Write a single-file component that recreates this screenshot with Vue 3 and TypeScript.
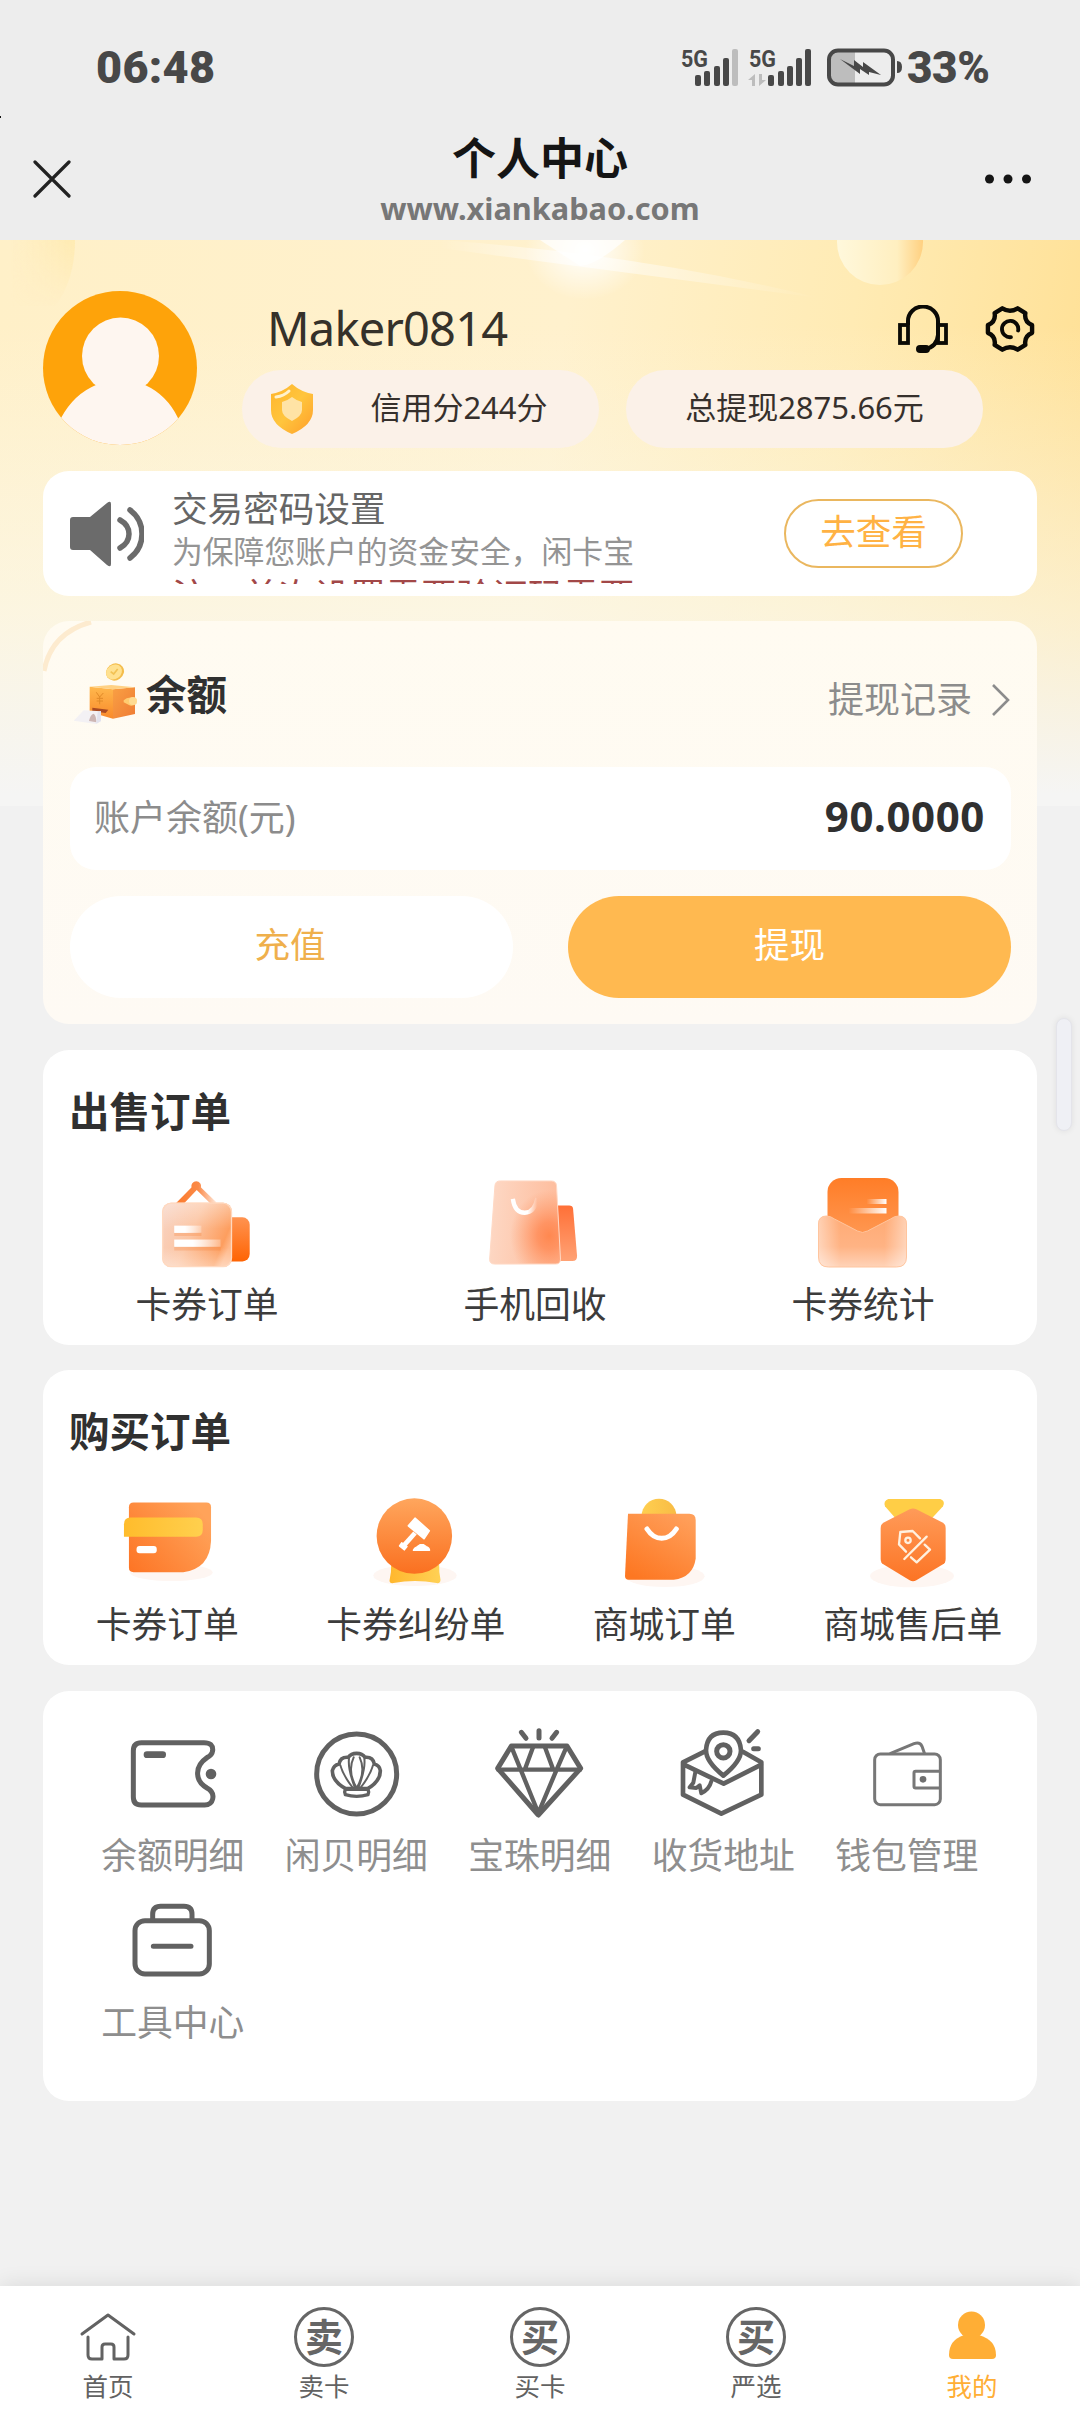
<script setup lang="ts">
interface Item {
  icon: string
  label: string
  box: string
}

const sellItems: Item[] = [
  { icon: 'coupon', label: '卡券订单', box: '178 45 290 290' },
  { icon: 'phone', label: '手机回收', box: '1164 45 290 290' },
  { icon: 'stats', label: '卡券统计', box: '814.500 1175 96 96' },
]

const buyItems: Item[] = [
  { icon: 'card', label: '卡券订单', box: '237 45 290 290' },
  { icon: 'gavel', label: '卡券纠纷单', box: '986 45 290 290' },
  { icon: 'bag', label: '商城订单', box: '168 45 288 288' },
  { icon: 'medal', label: '商城售后单', box: '916 45 288 288' },
]

const toolItems: Item[] = [
  { icon: 'ticket', label: '余额明细', box: '135 48 288 288' },
  { icon: 'shell', label: '闲贝明细', box: '685 48 288 288' },
  { icon: 'gem', label: '宝珠明细', box: '-84 48 288 288' },
  { icon: 'address', label: '收货地址', box: '465 48 288 288' },
  { icon: 'wallet', label: '钱包管理', box: '1016 48 288 288' },
  { icon: 'toolbox', label: '工具中心', box: '135 549 288 288' },
]

const tabs = [
  { icon: 'home', label: '首页', glyph: '' },
  { icon: 'glyph', label: '卖卡', glyph: '卖' },
  { icon: 'glyph', label: '买卡', glyph: '买' },
  { icon: 'glyph', label: '严选', glyph: '买' },
  { icon: 'me', label: '我的', glyph: '' },
]
</script>

<template>
  <div class="page">
    <header class="top">
      <div class="status">
        <span class="clock">06:48</span>
        <svg class="signals" width="224" height="44" viewBox="680 46 224 44">
          <g fill="#484848">
            <text x="681" y="67" class="net" textLength="27" lengthAdjust="spacingAndGlyphs">5G</text>
            <rect x="695" y="75" width="6" height="11" rx="2" />
            <rect x="704" y="71" width="6" height="15" rx="2" />
            <rect x="714" y="66" width="6" height="20" rx="2" />
            <rect x="723" y="58" width="6" height="28" rx="2" />
            <rect x="732" y="49" width="6" height="37" rx="2" fill="#bdbdbd" />
            <text x="749" y="67" class="net" textLength="27" lengthAdjust="spacingAndGlyphs">5G</text>
            <rect x="768" y="75" width="6" height="11" rx="2" />
            <rect x="778" y="71" width="6" height="15" rx="2" />
            <rect x="787" y="66" width="6" height="20" rx="2" />
            <rect x="796" y="58" width="6" height="28" rx="2" />
            <rect x="805" y="49" width="6" height="37" rx="2" />
          </g>
          <path d="M748 80l7-6v12h-3v-6zM766 80l-7 6v-12h3v6z" fill="#bdbdbd" />
          <path d="M829 60q0-9 9-9h17v34h-17q-9 0-9-9z" fill="#bdbdbd" />
          <rect x="829" y="50.500" width="64" height="34" rx="9" fill="none" stroke="#484848" stroke-width="4" />
          <path d="M897 61q5 0 5 6t-5 6z" fill="#484848" />
          <path d="M840 59l14 7v-6l9 7v-5l18 13-12-3v3l-9-6v5z" fill="#484848" />
        </svg>
        <span class="percent">33%</span>
      </div>
      <div class="nav">
        <svg width="38" height="38" viewBox="0 0 38 38">
          <path d="M2 2l34 34M36 2L2 36" stroke="#222" stroke-width="3.200" stroke-linecap="round" />
        </svg>
        <div class="titles">
          <h1>个人中心</h1>
          <p>www.xiankabao.com</p>
        </div>
        <svg width="48" height="12" viewBox="0 0 48 12" fill="#151515">
          <circle cx="5.500" cy="6" r="4.500" />
          <circle cx="24" cy="6" r="4.500" />
          <circle cx="42.500" cy="6" r="4.500" />
        </svg>
      </div>
    </header>

    <main class="body">
      <svg class="glow" width="1080" height="200" viewBox="0 240 1080 200">
        <defs>
          <radialGradient id="spark"><stop offset="0" stop-color="#fff" /><stop offset="1" stop-color="#fff" stop-opacity="0" /></radialGradient>
          <linearGradient id="ball" x1="0" y1="0" x2="1" y2="0"><stop offset="0" stop-color="#fff8dc" /><stop offset=".7" stop-color="#ffefc0" /><stop offset="1" stop-color="#ffd080" /></linearGradient>
          <linearGradient id="leaf" x1="0" y1="0" x2="1" y2="0"><stop offset="0" stop-color="#ffe9a8" stop-opacity="0" /><stop offset="1" stop-color="#ffe6a0" stop-opacity=".55" /></linearGradient>
          <linearGradient id="leaf-fade" x1="0" y1="0" x2="0" y2="1"><stop offset="0" stop-color="#fff" /><stop offset="1" stop-color="#000" /></linearGradient>
          <mask id="leaf-mask"><rect x="0" y="240" width="80" height="70" fill="url(#leaf-fade)" /></mask>
          <linearGradient id="ray" x1="0" y1="0" x2="1" y2="0"><stop offset="0" stop-color="#fff" stop-opacity="0" /><stop offset=".35" stop-color="#fff" stop-opacity=".6" /><stop offset="1" stop-color="#fff" stop-opacity="0" /></linearGradient>
        </defs>
        <path d="M10 240h65q0 40-20 66H10z" fill="url(#leaf)" mask="url(#leaf-mask)" />
        <ellipse cx="585" cy="250" rx="60" ry="50" fill="url(#spark)" />
        <path d="M440 240q200 14 380 58q-200-26-380-50z" fill="url(#ray)" />
        <path d="M540 240h85q-30 26-45 26z" fill="#fff" opacity=".7" />
        <circle cx="880" cy="242" r="43" fill="url(#ball)" />
      </svg>

      <section class="profile">
        <svg width="154" height="154" viewBox="0 0 154 154">
          <defs><clipPath id="av"><circle cx="77" cy="77" r="77" /></clipPath></defs>
          <g clip-path="url(#av)">
            <rect width="154" height="154" fill="#fea30a" />
            <circle cx="77.500" cy="65" r="38.500" fill="#fef6f0" />
            <path d="M53 94q24 8 49 0q22 10 33 33v27H18v-27q13-24 35-33z" fill="#fef6f0" />
          </g>
        </svg>
        <div class="who">
          <div class="name-row">
            <span class="name">Maker0814</span>
            <svg class="headset" width="50" height="48" viewBox="0 0 50 48" fill="none" stroke="#0b0a05" stroke-width="4">
              <path d="M10 20V16a15 14.500 0 0 1 30 0V30q-1 12-13 14" />
              <rect x="2" y="20" width="8" height="18" stroke-width="3.800" />
              <rect x="40" y="20" width="8" height="18" stroke-width="3.800" />
              <rect x="18" y="40" width="14" height="8" rx="4" fill="#0b0a05" stroke="none" />
            </svg>
            <svg width="50" height="48" viewBox="0 0 52 50" fill="none" stroke="#0b0a05" stroke-width="4.600" stroke-linejoin="round" stroke-linecap="round">
              <path d="M18 3.500Q26 8.500 34 3.500L42 8.500Q40.500 17.500 49 21V29Q40.500 32.500 42 41.500L34 46.500Q26 41.500 18 46.500L10 41.500Q11.500 32.500 3 29V21Q11.500 17.500 10 8.500Z" />
              <path d="M27 33.500a8.500 8.500 0 1 1 7.500-7" stroke-width="4" />
            </svg>
          </div>
          <div class="pills">
            <div class="pill">
              <svg width="44" height="52" viewBox="0 0 44 52">
                <defs><linearGradient id="sh" x1="0" y1="0" x2="1" y2="1"><stop offset="0" stop-color="#ffb52c" /><stop offset=".5" stop-color="#ffc53d" /><stop offset="1" stop-color="#ff9e2a" /></linearGradient></defs>
                <path d="M22 1q9 8 21 10v16q0 15-21 24Q1 42 1 27V11Q13 9 22 1z" fill="url(#sh)" />
                <path d="M22 14q5 4 10 5v8q0 6-10 11-10-5-10-11v-8q5-1 10-5z" fill="#ffe3a5" />
                <path d="M6 14q8-1 13-6" fill="none" stroke="#fff2cd" stroke-width="3" stroke-linecap="round" />
              </svg>
              <span>信用分244分</span>
            </div>
            <div class="pill plain"><span>总提现2875.66元</span></div>
          </div>
        </div>
      </section>

      <section class="notice">
        <svg width="74" height="66" viewBox="0 0 74 66" fill="#6b6b6b">
          <path d="M3 16h17L37 2q4-3 4 1v60q0 4-4 1L20 49H3q-3 0-3-3V19q0-3 3-3z" />
          <path d="M50 19q9 5 9 14t-9 14M60 9q12 9 12 24t-12 24" fill="none" stroke="#6b6b6b" stroke-width="5.500" stroke-linecap="round" />
        </svg>
        <div class="notice-text">
          <h2>交易密码设置</h2>
          <p>为保障您账户的资金安全，闲卡宝</p>
          <p class="warn">注：首次设置需要验证码需要</p>
        </div>
        <button class="check">去查看</button>
      </section>

      <section class="balance">
        <svg class="arc" width="70" height="60" viewBox="0 0 70 60">
          <path d="M1 50Q8 12 48 1" fill="none" stroke="#fdebcf" stroke-width="5" />
        </svg>
        <div class="balance-head">
          <svg class="purse" width="70" height="66" viewBox="40 115 210 198">
            <defs>
              <linearGradient id="wl" x1="0" y1="0" x2="0" y2="1"><stop offset="0" stop-color="#ffb84d" /><stop offset="1" stop-color="#f98a2b" /></linearGradient>
              <linearGradient id="wr" x1="0" y1="0" x2="1" y2="1"><stop offset="0" stop-color="#f9a044" /><stop offset="1" stop-color="#ef7c34" /></linearGradient>
            </defs>
            <path d="M90 195l70 8v88l-70-20z" fill="url(#wl)" />
            <path d="M160 203l66-6v80l-66 14z" fill="url(#wr)" />
            <path d="M90 195l65-5 71 7-66 6z" fill="#ffd184" />
            <path d="M110 212l10 14 11-12M120 226v22M111 230h19M111 238h19" fill="none" stroke="#e08a28" stroke-width="3" />
            <path d="M192 236q14-14 38-4v14q-14 10-22 4l-16-8z" fill="#ffcc70" />
            <circle cx="220" cy="238" r="12" fill="#ffdb92" />
            <path d="M98 258l48 6-8 10-40-5z" fill="#a94a22" />
            <path d="M72 266l52 3v30l-14 8-68-10z" fill="#f3f1f4" />
            <path d="M88 298q4-20 14-22 8 6 8 26z" fill="#cdb6b4" />
            <path d="M110 306l14-8v-30l-10 4z" fill="#e3e3ee" />
            <ellipse cx="166" cy="151" rx="28" ry="25" transform="rotate(-35 166 151)" fill="#f4bd4c" />
            <ellipse cx="163" cy="151" rx="25" ry="21" transform="rotate(-35 163 151)" fill="#ffe190" />
            <path d="M153 150l9 7 12-15" fill="none" stroke="#f2c255" stroke-width="5" />
          </svg>
          <h3>余额</h3>
          <span class="record">提现记录</span>
          <svg class="chev" width="20" height="32" viewBox="0 0 20 32"><path d="M2 1l15 15L2 31" fill="none" stroke="#8c8c8c" stroke-width="2.600" /></svg>
        </div>
        <div class="amount"><span>账户余额(元)</span><b>90.0000</b></div>
        <div class="actions">
          <button class="recharge">充值</button>
          <button class="withdraw">提现</button>
        </div>
      </section>

      <section class="card orders">
        <h3>出售订单</h3>
        <div class="grid three">
          <div v-for="it in sellItems" :key="it.icon" class="cell">
            <svg width="96" height="96" :viewBox="it.box">
              <template v-if="it.icon === 'coupon'">
                <defs>
                  <linearGradient id="c1" x1="0" y1="0" x2="1" y2="0"><stop offset="0" stop-color="#fb7a2c" /><stop offset=".55" stop-color="#fb8a48" /><stop offset="1" stop-color="#ffe9dc" /></linearGradient>
                  <linearGradient id="c2" x1="0" y1="0" x2="0" y2="1"><stop offset="0" stop-color="#ff9350" /><stop offset="1" stop-color="#fe6404" /></linearGradient>
                  <linearGradient id="c3" x1="0" y1=".2" x2="1" y2=".6"><stop offset="0" stop-color="#f8d2c0" /><stop offset=".45" stop-color="#fcc5a3" /><stop offset=".9" stop-color="#fd9e5f" /><stop offset="1" stop-color="#ffb98b" /></linearGradient>
                  <linearGradient id="c4" x1="0" y1="0" x2="1" y2="0"><stop offset="0" stop-color="#fff" /><stop offset=".4" stop-color="#fff" /><stop offset="1" stop-color="#fff" stop-opacity=".25" /></linearGradient>
                  <linearGradient id="c5" x1="0" y1="0" x2="0" y2="1"><stop offset="0" stop-color="#fff" stop-opacity=".3" /><stop offset=".4" stop-color="#fff" stop-opacity="0" /><stop offset=".7" stop-color="#fff" stop-opacity="0" /><stop offset="1" stop-color="#fff" stop-opacity=".4" /></linearGradient>
                </defs>
                <path d="M229 130l47-47a15 15 0 1 1 29 0l47 45-18 4-42-42-38 40z" fill="url(#c1)" />
                <rect x="370" y="173" width="82" height="133" rx="22" fill="url(#c2)" />
                <rect x="188" y="129" width="210" height="194" rx="26" fill="url(#c3)" />
                <rect x="189" y="130" width="208" height="192" rx="26" fill="url(#c5)" stroke="#ffd9c0" stroke-width="4" />
                <path d="M224 219h82v10h-82zM224 261h140v12H224z" fill="#f37a30" opacity=".25" />
                <rect x="224" y="198" width="82" height="22" fill="url(#c4)" />
                <rect x="224" y="240" width="140" height="22" fill="url(#c4)" />
              </template>
              <template v-else-if="it.icon === 'phone'">
                <defs>
                  <linearGradient id="p1" x1="0" y1="0" x2="0" y2="1"><stop offset="0" stop-color="#ff7037" /><stop offset="1" stop-color="#ffa275" /></linearGradient>
                  <linearGradient id="p2" x1="0" y1="0" x2="1" y2=".1"><stop offset="0" stop-color="#fdd9c6" /><stop offset="1" stop-color="#febc9c" /></linearGradient>
                  <radialGradient id="p3" cx=".84" cy=".66" r=".55"><stop offset="0" stop-color="#ff8850" /><stop offset=".3" stop-color="#ff8c58" stop-opacity=".85" /><stop offset="1" stop-color="#ff9a68" stop-opacity="0" /></radialGradient>
                  <linearGradient id="p4" x1="0" y1="0" x2="1" y2="0"><stop offset="0" stop-color="#fff" /><stop offset=".6" stop-color="#fff" /><stop offset="1" stop-color="#fff" stop-opacity="0" /></linearGradient>
                </defs>
                <path d="M1370 137h42q11 0 12 10l12 142q1 16-14 16h-52z" fill="url(#p1)" />
                <path d="M1204 63h154q15 0 16 14l12 222q0 15-14 15h-184q-17 0-16-15l16-222q1-14 16-14z" fill="url(#p2)" />
                <path d="M1204 63h154q15 0 16 14l12 222q0 15-14 15h-184q-17 0-16-15l16-222q1-14 16-14z" fill="url(#p3)" stroke="#ffd9c5" stroke-width="3" />
                <path d="M1242 117q6 42 36 42t38-44" fill="none" stroke="url(#p4)" stroke-width="13" />
              </template>
              <template v-else>
                <defs>
                  <linearGradient id="s1" x1="0" y1="0" x2="0" y2="1"><stop offset="0" stop-color="#ff7d27" /><stop offset="1" stop-color="#ff9d5b" /></linearGradient>
                  <linearGradient id="s2" x1="0" y1="0" x2="0" y2="1"><stop offset="0" stop-color="#ffaa74" /><stop offset=".6" stop-color="#ffb384" /><stop offset="1" stop-color="#ffd3b8" /></linearGradient>
                  <linearGradient id="s3" x1="0" y1="0" x2="1" y2="0"><stop offset="0" stop-color="#fff" stop-opacity="0" /><stop offset="1" stop-color="#fff" /></linearGradient>
                  <linearGradient id="s4" x1="0" y1="0" x2="1" y2="0"><stop offset="0" stop-color="#fff" stop-opacity=".45" /><stop offset=".25" stop-color="#fff" stop-opacity="0" /><stop offset=".75" stop-color="#fff" stop-opacity="0" /><stop offset="1" stop-color="#fff" stop-opacity=".45" /></linearGradient>
                </defs>
                <rect x="827" y="1178" width="71" height="70" rx="14" fill="url(#s1)" />
                <rect x="866" y="1199" width="20" height="5" fill="url(#s3)" />
                <rect x="848" y="1208" width="38" height="5.500" fill="url(#s3)" />
                <path d="M826 1216q4 0 8 3l23 12q5 3 10 0l23-12q4-3 8-3 8 0 8 8v33q0 10-10 10h-68q-10 0-10-10v-33q0-8 8-8z" fill="url(#s2)" />
                <path d="M826 1216q4 0 8 3l23 12q5 3 10 0l23-12q4-3 8-3 8 0 8 8v33q0 10-10 10h-68q-10 0-10-10v-33q0-8 8-8z" fill="url(#s4)" stroke="#ffc59e" stroke-width="1" />
              </template>
            </svg>
            <span>{{ it.label }}</span>
          </div>
        </div>
      </section>

      <section class="card orders">
        <h3>购买订单</h3>
        <div class="grid four">
          <div v-for="it in buyItems" :key="it.icon" class="cell">
            <svg width="96" height="96" :viewBox="it.box">
              <template v-if="it.icon === 'card'">
                <defs>
                  <linearGradient id="b1" x1="0" y1="1" x2="1" y2=".3"><stop offset="0" stop-color="#fd7424" /><stop offset="1" stop-color="#ffa35a" /></linearGradient>
                  <linearGradient id="b2" x1="0" y1="0" x2="1" y2="0"><stop offset="0" stop-color="#ffbc2c" /><stop offset="1" stop-color="#ffd04e" /></linearGradient>
                </defs>
                <ellipse cx="395" cy="279" rx="125" ry="26" fill="#fef6f2" />
                <path d="M281 68h220q14 0 14 14v102q-4 84-84 94H281q-14 0-14-14V82q0-14 14-14z" fill="url(#b1)" />
                <path d="M272 113h198q20 0 20 20v18q0 20-20 20H252v-38q0-20 20-20z" fill="url(#b2)" />
                <rect x="290" y="199" width="61" height="22" rx="9" fill="#fff" />
              </template>
              <template v-else-if="it.icon === 'gavel'">
                <defs>
                  <linearGradient id="g1" x1="0" y1="0" x2="0" y2="1"><stop offset="0" stop-color="#ffa65d" /><stop offset="1" stop-color="#fa7020" /></linearGradient>
                  <linearGradient id="g2" x1="0" y1="0" x2="1" y2="0"><stop offset="0" stop-color="#ffb72e" /><stop offset="1" stop-color="#ffd155" /></linearGradient>
                </defs>
                <ellipse cx="1128" cy="288" rx="126" ry="32" fill="#fef6f2" />
                <path d="M1056 255h145q-1 24 4 46 0 12-12 10-65-12-130 0-12 2-12-8 6-24 5-48z" fill="url(#g2)" />
                <circle cx="1126" cy="169" r="114" fill="url(#g1)" />
                <path d="M1128 115l43 38-16 24-47-39z" fill="#fff" stroke="#fff" stroke-width="5" stroke-linejoin="round" />
                <path d="M1128 160l-34 38" stroke="#fff" stroke-width="14" />
                <path d="M1088 189l16 12-8 10-15-12zM1123 212q2-7 12-11l8-6h11l8 6q10 4 10 11z" fill="#fff" stroke="#fff" stroke-width="4" stroke-linejoin="round" />
              </template>
              <template v-else-if="it.icon === 'bag'">
                <defs>
                  <linearGradient id="m1" x1=".8" y1="0" x2=".2" y2="1"><stop offset="0" stop-color="#ff9f5a" /><stop offset="1" stop-color="#fd7722" /></linearGradient>
                  <linearGradient id="m2" x1="0" y1="0" x2="1" y2="0"><stop offset="0" stop-color="#ffcf50" /><stop offset="1" stop-color="#f8bc45" /></linearGradient>
                </defs>
                <ellipse cx="315" cy="289" rx="119" ry="32" fill="#fef6f2" />
                <circle cx="297" cy="108" r="52" fill="url(#m2)" />
                <path d="M204 101h184q19 0 19 19v116q-8 56-66 63H206q-11 0-11-11z" fill="url(#m1)" />
                <path d="M261 147q18 28 44 28t44-28" fill="none" stroke="#fff" stroke-width="15" stroke-linecap="round" />
              </template>
              <template v-else>
                <defs>
                  <linearGradient id="h1" x1="0" y1="0" x2="0" y2="1"><stop offset="0" stop-color="#ff9b59" /><stop offset="1" stop-color="#fc7424" /></linearGradient>
                </defs>
                <ellipse cx="1057" cy="288" rx="126" ry="34" fill="#fef6f2" />
                <path d="M986 57h156q16 6 8 22l-40 43h-96l-38-43q-6-16 10-22z" fill="#ffce46" />
                <path d="M1050 88q10-5 20 0l80 40q8 5 8 16v92q0 12-8 17l-80 48q-10 6-20 0l-79-48q-8-5-8-17v-92q0-11 8-16z" fill="url(#h1)" />
                <g fill="none" stroke="#fff1df" stroke-width="7" stroke-linecap="round" stroke-linejoin="round">
                  <path d="M1034 237l67-67M1039 215l-21-22 4-37 37-3 22 22M1095 194l16 15-40 38-17-15" />
                  <circle cx="1045" cy="181" r="8" />
                </g>
              </template>
            </svg>
            <span>{{ it.label }}</span>
          </div>
        </div>
      </section>

      <section class="card tools">
        <div class="grid five">
          <div v-for="it in toolItems" :key="it.icon" class="cell soft">
            <svg width="96" height="96" :viewBox="it.box" fill="none" stroke="#616161" stroke-width="15" stroke-linecap="round" stroke-linejoin="round">
              <template v-if="it.icon === 'ticket'">
                <path d="M184 98h188q28 0 26 24-2 14-16 20-32 22-29 52 1 24 28 40 22 12 17 33-4 18-24 18H184q-24 0-24-24V122q0-24 24-24z" />
                <path d="M201 134h47" stroke-width="20" />
                <circle cx="393" cy="192" r="16" fill="#616161" stroke="none" />
              </template>
              <template v-else-if="it.icon === 'shell'">
                <circle cx="831" cy="192" r="120" />
                <path d="M798 236Q758 214 758 182q4-16 20-20 4-22 28-20 8-12 25-12t25 12q24-2 28 20 16 4 18 20 0 32-38 54z" stroke-width="11" />
                <path d="M820 234Q790 196 782 166M826 234Q804 176 808 146M831 234Q802 184 822 142M831 234Q860 184 840 142M836 234Q858 176 854 146M842 234Q872 196 880 166" stroke-width="6" />
                <path d="M797 238h68q4 8 0 16-34 10-68 0-4-8 0-16z" stroke-width="10" fill="#fff" />
              </template>
              <template v-else-if="it.icon === 'gem'">
                <path d="M-26 108h167l41 67-127 140L-67 175z" />
                <path d="M-65 179h245M-26 110L2 179l53 130 55-130 30-69M39 112L15 177M75 112l24 65" stroke-width="13" />
                <path d="M57 62v22M4 67l14 18M110 67L96 85" stroke-width="15" />
              </template>
              <template v-else-if="it.icon === 'address'">
                <path d="M555 124l-66 33v97l115 57 120-57v-97l-54-31M492 164l119 57 113-57" stroke-width="14" />
                <path d="M610 197q-52-42-52-76 3-53 52-53t53 53q0 34-53 76z" stroke-width="14" fill="#fff" />
                <circle cx="610" cy="124" r="20" stroke-width="15" />
                <path d="M526 186l-6 32-11 14 20 2 10-8 5 24q24-12 30-36" stroke-width="12" />
                <path d="M687 92l26-27M701 116h14" stroke-width="15" />
              </template>
              <template v-else-if="it.icon === 'wallet'">
                <g stroke="#777" stroke-width="9">
                  <rect x="1063" y="132" width="197" height="152" rx="17" />
                  <path d="M1111 130l70-29q18-6 24 8l7 20M1258 184h-72q-5 0-5 5v40q0 5 5 5h72" />
                </g>
                <circle cx="1208" cy="208" r="10" fill="#6f6f6f" stroke="none" />
              </template>
              <template v-else>
                <rect x="165" y="632" width="223" height="160" rx="30" />
                <path d="M218 628v-15q0-24 24-24h70q24 0 24 24v15M220 709h113" />
              </template>
            </svg>
            <span>{{ it.label }}</span>
          </div>
        </div>
      </section>
    </main>

    <footer class="tabbar">
      <div v-for="t in tabs" :key="t.label" class="tab" :class="{ active: t.icon === 'me' }">
        <svg v-if="t.icon === 'home'" width="60" height="60" viewBox="78 2307 60 60" fill="none" stroke="#626262" stroke-width="3" stroke-linecap="round" stroke-linejoin="round">
          <path d="M82 2334l26-19 26 19M88 2337v18q0 4 4 4h10v-12q0-3 3-3h6q3 0 3 3v12h10q4 0 4-4v-18" />
        </svg>
        <svg v-else-if="t.icon === 'me'" width="60" height="60" viewBox="942 2307 60 60" fill="#ffae35">
          <ellipse cx="971.500" cy="2325" rx="13.500" ry="13.500" />
          <path d="M964 2335h15q17 5 17 20 0 4-4 4h-39q-4 0-4-4 0-15 15-20z" />
        </svg>
        <div v-else class="ring">{{ t.glyph }}</div>
        <span>{{ t.label }}</span>
      </div>
    </footer>
    <div class="edge"></div>
    <div class="speck"></div>
  </div>
</template>

<style>
body {
  margin: 0;
  background: #f1f1f1;
}
</style>

<style scoped>
* {
  box-sizing: border-box;
}
h1,
h2,
h3,
p {
  margin: 0;
}
svg {
  display: block;
  flex: none;
}
.page {
  position: relative;
  width: 1080px;
  height: 2412px;
  overflow: hidden;
  display: flex;
  flex-direction: column;
  background: #f1f1f1;
  color: #333;
  font-family: 'Noto Sans', 'Noto Sans CJK SC', sans-serif;
}
.top {
  height: 240px;
  flex: none;
  background: #ededed;
}
.status {
  display: flex;
  align-items: center;
  height: 136px;
  padding: 0 90px 0 96px;
  color: #484848;
  font: 900 45px/60px Roboto, sans-serif;
}
.net {
  font: 700 24px Roboto, sans-serif;
}
.clock {
  letter-spacing: 0.3px;
}
.signals {
  margin-left: auto;
}
.percent {
  width: 86px;
  padding-left: 3px;
  letter-spacing: -0.4px;
  font-size: 44px;
}
.nav {
  display: flex;
  align-items: center;
  height: 86px;
  padding: 0 48px 0 33px;
}
.titles {
  flex: 1;
  text-align: center;
  padding-left: 25px;
}
.titles h1 {
  font: 700 44px/46px 'Noto Sans CJK SC', sans-serif;
  color: #151515;
}
.titles p {
  position: relative;
  top: 6px;
  font: 700 30.7px/46px 'Noto Sans', sans-serif;
  color: #777;
}
.body {
  position: relative;
  flex: 1;
  padding: 51px 43px 0;
  background:
    linear-gradient(to bottom, rgba(244, 244, 244, 0) 15%, rgba(250, 249, 240, 0.6) 65%, #f5f5f4 98%) 0 0 / 100% 566px no-repeat,
    linear-gradient(97deg, #fff0c8 0%, #fff1cd 50%, #ffebb4 75%, #ffdf92 100%) 0 0 / 100% 566px no-repeat;
}
.glow {
  position: absolute;
  left: 0;
  top: 0;
}
.profile {
  position: relative;
  display: flex;
  height: 180px;
}
.who {
  flex: 1;
}
.name-row {
  display: flex;
  align-items: center;
  height: 79px;
  padding: 0 2px 3px 70px;
}
.name {
  flex: 1;
  font: 400 47px/60px 'Noto Sans', sans-serif;
  letter-spacing: -0.8px;
  padding-bottom: 3px;
  color: #35312a;
}
.headset {
  margin-right: 37px;
}
.pills {
  display: flex;
  gap: 27px;
  padding-left: 45px;
}
.pill {
  display: flex;
  align-items: center;
  width: 357px;
  height: 78px;
  border-radius: 39px;
  padding-left: 28px;
  background: #fbf1e8;
  color: #36302c;
  font-size: 31px;
}
.pill span {
  flex: 1;
  text-align: center;
  margin-left: 5px;
  line-height: 44px;
  margin-top: -4px;
  white-space: nowrap;
}
.plain {
  padding-left: 0;
}
.plain span {
  margin-left: 0;
}
.notice {
  position: relative;
  display: flex;
  align-items: center;
  height: 125px;
  border-radius: 26px;
  background: #fff;
  padding: 0 74px 0 27px;
}
.notice-text {
  width: 470px;
  height: 100px;
  margin: 0 auto 0 28px;
  overflow: hidden;
  white-space: nowrap;
}
.notice-text h2 {
  font-weight: 400;
  font-size: 35.6px;
  line-height: 48px;
  color: #666;
}
.notice-text p {
  font-size: 30.8px;
  line-height: 38px;
  color: #949494;
}
.notice-text .warn {
  font-size: 35.6px;
  line-height: 50px;
  color: #a24848;
}
button {
  font-family: inherit;
  border: 0;
  padding: 0;
}
.check {
  width: 179px;
  height: 69px;
  border: 2px solid #eab75f;
  border-radius: 35px;
  background: #fff;
  color: #ffb244;
  font-size: 35.6px;
  line-height: 60px;
  padding-bottom: 5px;
}
.balance {
  position: relative;
  height: 403px;
  margin-top: 25px;
  border-radius: 26px;
  padding: 31px 26px 0 27px;
  background: linear-gradient(to bottom, #fffbf1, #fefaf4);
}
.arc {
  position: absolute;
  left: 0;
  top: 0;
}
.balance-head {
  display: flex;
  align-items: center;
  height: 115px;
  padding: 0 0 34px 6px;
}
h3 {
  font: 700 40.5px/56px 'Noto Sans CJK SC', sans-serif;
  color: #303030;
}
.purse {
  margin: 0 3px 0 -3px;
}
.record {
  margin-left: auto;
  padding-top: 14px;
  font-size: 36px;
  line-height: 50px;
  color: #8c8c8c;
}
.chev {
  margin: 14px 0 0 19px;
}
.amount {
  display: flex;
  align-items: center;
  justify-content: space-between;
  height: 103px;
  border-radius: 26px;
  padding: 0 26px 0 24px;
  background: #fff;
  font-size: 36px;
  color: #8c8c8c;
}
.amount span {
  padding-bottom: 7px;
}
.amount b {
  font: 700 42px/50px 'Noto Sans', sans-serif;
  letter-spacing: 0.6px;
  padding-bottom: 6px;
  color: #303030;
}
.actions {
  display: flex;
  justify-content: space-between;
  margin-top: 26px;
}
.actions button {
  width: 443px;
  height: 102px;
  border-radius: 51px;
  font-size: 35.6px;
  line-height: 97px;
  padding-bottom: 5px;
}
.actions .recharge {
  background: #fff;
  color: #efb04c;
  padding-right: 3px;
}
.withdraw {
  background: #ffb950;
  color: #fff;
}
.card {
  border-radius: 26px;
  background: #fff;
  margin-top: 26px;
}
.orders {
  height: 295px;
  padding-top: 32px;
}
.orders + .orders {
  margin-top: 25px;
}
.orders h3 {
  padding-left: 26px;
}
.grid {
  display: grid;
}
.three {
  grid-template-columns: repeat(3, 328px);
  margin-top: 37px;
}
.four {
  grid-template-columns: repeat(4, 248.5px);
  margin-top: 37px;
}
.five {
  grid-template-columns: repeat(5, 183.5px);
  grid-auto-rows: 167px;
  padding-left: 38px;
}
.tools {
  height: 410px;
  padding-top: 35px;
}
.cell {
  display: flex;
  flex-direction: column;
  align-items: center;
  font-size: 35.8px;
  line-height: 50px;
  color: #3c3c3c;
}
.cell span {
  margin-top: 8px;
}
.cell.soft {
  color: #8e8e8e;
}
.tabbar {
  position: relative;
  display: flex;
  height: 126px;
  flex: none;
  padding-top: 21px;
  background: #fff;
  box-shadow: 0 -2px 20px rgba(0, 0, 0, 0.09);
}
.tab {
  flex: 1;
  display: flex;
  flex-direction: column;
  align-items: center;
  gap: 1px;
  font-size: 25.5px;
  line-height: 36px;
  color: #626262;
}
.active {
  color: #ffae35;
}
.ring {
  width: 60px;
  height: 60px;
  border: 3px solid #666;
  border-radius: 50%;
  font: 700 38px/50px 'Noto Sans CJK SC', sans-serif;
  color: #666;
  text-align: center;
}
.edge {
  position: absolute;
  left: 1056px;
  top: 1018px;
  width: 16px;
  height: 113px;
  border-radius: 8px;
  background: #eff0f5;
  border: 1px solid #e4e4ea;
  box-shadow: 0 0 6px rgba(0, 0, 0, 0.08);
}
.speck {
  position: absolute;
  left: 0;
  top: 116px;
  width: 1px;
  height: 2px;
  background: #111;
}
</style>
